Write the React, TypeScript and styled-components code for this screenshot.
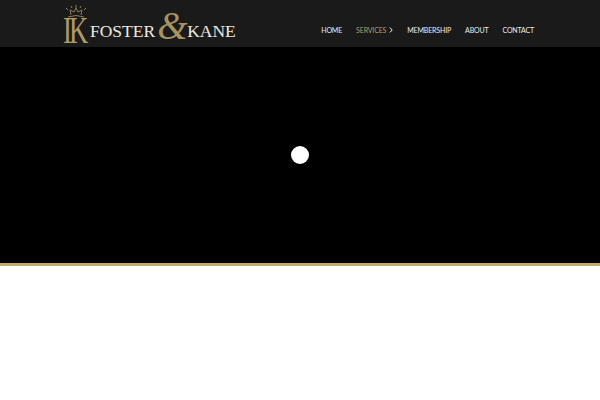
import React from "react";
import styled, { createGlobalStyle } from "styled-components";

const Global = createGlobalStyle`
  html, body { margin: 0; padding: 0; background: #fff; }
  body { font-family: "Lato", "Liberation Sans", sans-serif; }
`;
const Page = styled.div`width: 600px; height: 400px; overflow: hidden; background: #fff;`;
const Header = styled.header`
  height: 47px; background: #1a1a1a; display: flex; align-items: center;
  justify-content: space-between; padding: 0 66px 0 65px;
`;
const Logo = styled.a`display: flex; align-items: flex-start; height: 47px; color: #ece9e1; font-family: "Liberation Serif", serif;`;
const Monogram = styled.span`display: flex; flex-direction: column; align-items: center; width: 22px; margin: 4px 3px 0 0;`;
const Initials = styled.span`font-size: 37px; line-height: 26px; height: 26px; color: #b09a68; letter-spacing: -4px; transform: scaleX(0.72); transform-origin: center; white-space: nowrap; padding-right: 4px;`;
const Word = styled.span`font-size: 17.5px; line-height: 20px; margin-top: 21px;`;
const Amp = styled.span`font-size: 39px; line-height: 34px; color: #a8925f; font-style: italic; margin: 9px -2px 0 2px; width: 32px;`;
const Nav = styled.nav`display: flex; align-items: center; gap: 14px; margin-top: 13px;`;
const Item = styled.a<{ $active?: boolean }>`
  display: flex; align-items: center; gap: 2px; font-size: 7px; letter-spacing: -0.15px; line-height: 12px; white-space: nowrap;
  color: ${(p) => (p.$active ? "#b39d6b" : "#ececec")};
`;
const Chevron = styled.svg`width: 4px; height: 6px; margin-left: 1px;`;
const Hero = styled.section`height: 216px; background: #000; display: flex; align-items: center; justify-content: center;`;
const Dot = styled.div`width: 18px; height: 18px; border-radius: 50%; background: #fff;`;
const Band = styled.div`height: 3px; background: #c4a76c;`;

export default function App() {
  return (
    <Page>
      <Global />
      <Header>
        <Logo>
          <Monogram>
            <svg width="22" height="14" viewBox="0 0 22 14" aria-hidden="true">
              <g fill="none" stroke="#8d7c57" strokeWidth="1">
                <path d="M3 13 Q11 10 19 13" />
                <path d="M6 11 L5 6 L9 8 L11 4 L13 8 L17 6 L16 11" />
                <path d="M11 4 V1 M3 6 L1 4 M19 6 L21 4 M7 4 L6 2 M15 4 L16 2" />
              </g>
            </svg>
            <Initials>IK</Initials>
          </Monogram>
          <Word>FOSTER</Word>
          <Amp>&amp;</Amp>
          <Word>KANE</Word>
        </Logo>
        <Nav>
          <Item>HOME</Item>
          <Item $active>
            SERVICES
            <Chevron viewBox="0 0 4 6" aria-hidden="true">
              <path d="M0.8 0.5 L3.2 3 L0.8 5.5" fill="none" stroke="#f0f0f0" strokeWidth="1" />
            </Chevron>
          </Item>
          <Item>MEMBERSHIP</Item>
          <Item>ABOUT</Item>
          <Item>CONTACT</Item>
        </Nav>
      </Header>
      <Hero><Dot /></Hero>
      <Band />
    </Page>
  );
}
